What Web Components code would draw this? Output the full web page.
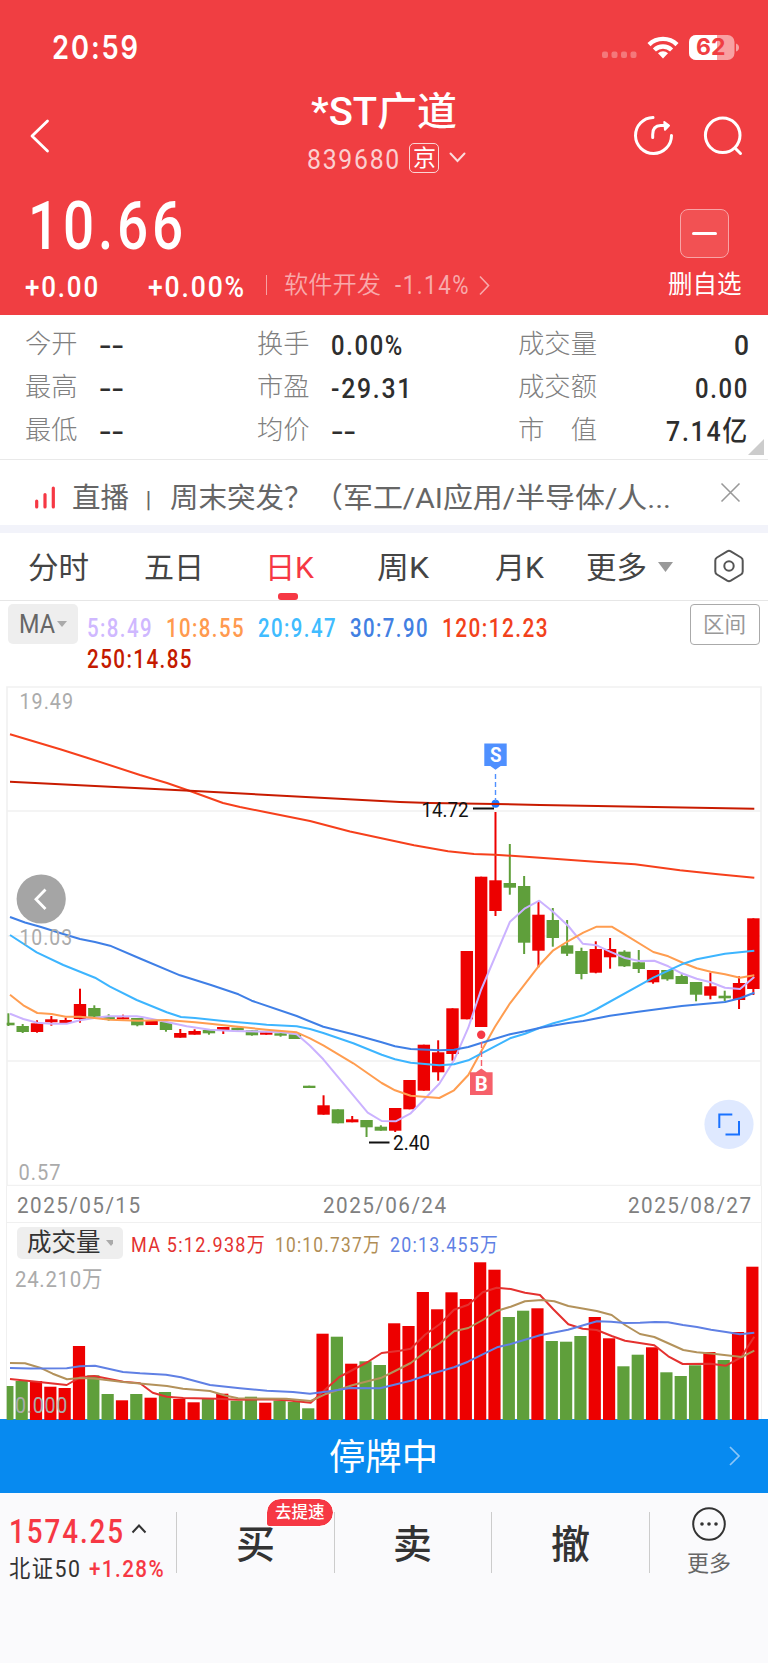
<!DOCTYPE html>
<html lang="zh-CN">
<head>
<meta charset="utf-8">
<title>*ST广道</title>
<style>
    body {
        margin: 0;
        width: 768px;
        background: #fff;
        color: #333;
        font-family: Roboto, 'Noto Sans CJK SC', sans-serif;
    }
</style>
</head>
<body>
<stock-app></stock-app>

<script>
const RED = '#ed0000';
const GREEN = '#5f9f3b';

const define = (name, html) => {
    customElements.define(name, class extends HTMLElement {
        constructor() {
            super();
            this.attachShadow({ mode: 'open' }).innerHTML = html;
        }
    });
};

// One line of text squeezed into a given width. The box is as tall as the
// capitals, so its bottom edge is the baseline. Figures are tracked out a bit,
// which leaves them narrower.
class FitText extends HTMLElement {
    constructor() {
        super();
        this.attachShadow({ mode: 'open' });
    }

    connectedCallback() {
        const w = this.getAttribute('w');
        const size = this.getAttribute('size');
        const h = (size * 0.711).toFixed(2);
        const tracking = /\d\d|\d\.\d/.test(this.textContent) ? 0.07 : 0;
        this.shadowRoot.innerHTML = `
            <style>
                :host { display: block; flex: none; }
                svg { display: block; overflow: visible; }
                text { font-size: ${size}px; font-weight: ${this.getAttribute('weight') || 400}; letter-spacing: ${tracking}em; fill: currentColor; white-space: pre; }
            </style>
            <svg width="${w}" height="${h}"><text y="${h}" textLength="${w}" lengthAdjust="spacingAndGlyphs"></text></svg>
        `;
        this.shadowRoot.querySelector('text').textContent = this.textContent;
    }
}
customElements.define('fit-text', FitText);

define('status-bar', `
    <style>
        :host { display: flex; height: 62px; align-items: flex-end; justify-content: space-between; padding: 0 28px 0 52px; }
        fit-text { margin-bottom: 3px; font-family: Inter, sans-serif; }
        svg { font-family: Inter, sans-serif; }
    </style>
    <fit-text w="88" size="32" weight="600">20:59</fit-text>
    <svg width="140" height="29" viewBox="600 33 140 29">
        <g fill="#fff" opacity=".3">
            <rect x="602" y="51.5" width="6" height="6.5" rx="2"/><rect x="611.5" y="51.5" width="6" height="6.5" rx="2"/>
            <rect x="621" y="51.5" width="6" height="6.5" rx="2"/><rect x="630.5" y="51.5" width="6" height="6.5" rx="2"/>
        </g>
        <g fill="none" stroke="#fff" stroke-width="4.4">
            <path d="M649 44.6a20 20 0 0 1 28 0"/>
            <path d="M654.4 50a12.2 12.2 0 0 1 17.2 0"/>
        </g>
        <path d="M663 58.5l-5-5.2a7.4 7.4 0 0 1 10 0z" fill="#fff"/>
        <clipPath id="b"><rect x="689" y="35" width="45.5" height="25" rx="7"/></clipPath>
        <g clip-path="url(#b)">
            <rect x="689" y="35" width="46" height="25" fill="#f8a1a2"/>
            <rect x="689" y="35" width="28" height="25" fill="#fff"/>
        </g>
        <path d="M736 43.5q3 1 3 4t-3 4z" fill="#f8a1a2"/>
        <text x="696" y="55.3" font-size="22.5" font-weight="700" fill="#f03e42" textLength="29.5" lengthAdjust="spacingAndGlyphs">62</text>
    </svg>
`);

define('nav-bar', `
    <style>
        :host { display: grid; grid-template-columns: 1fr auto 1fr; height: 114px; }
        .icons { margin-top: 50px; display: flex; gap: 26px; justify-self: end; padding-right: 23px; }
        .back { margin: 56px 0 0 28px; }
        .title { padding-top: 35px; display: flex; flex-direction: column; align-items: center; }
        .sub { margin: 18px 0 0 5px; display: flex; align-items: center; height: 30px; }
        .code { color: #fbcfd0; margin-right: 8px; padding-top: 2px; }
        .tag { box-sizing: border-box; width: 30px; height: 30px; border: 1.5px solid #fbd5d5; border-radius: 5px; margin-right: 10px; padding: 6px 0 0 2.5px; }
    </style>
    <svg class="back" width="24" height="36" fill="none" stroke="#fff" stroke-width="2.8" stroke-linecap="round" stroke-linejoin="round"><path d="M19.5 3L4 18l15.500 15"/></svg>
    <div class="title">
        <fit-text w="146" size="39" weight="500">*ST广道</fit-text>
        <div class="sub">
            <fit-text class="code" w="94" size="28">839680</fit-text>
            <div class="tag"><fit-text w="23" size="22.500">京</fit-text></div>
            <svg width="17" height="11" fill="none" stroke="#fbdcdc" stroke-width="2" stroke-linecap="round"><path d="M1.500 1.500l7 7.500 7-7.500"/></svg>
        </div>
    </div>
    <div class="icons">
        <svg width="44" height="46" viewBox="631 112 44 46" fill="none" stroke="#fff" stroke-width="3" stroke-linecap="round" stroke-linejoin="round">
            <path d="M653 117.500a18 18 0 1 0 18.500 18"/>
            <path d="M652.700 137.500v-3q0-9 8-9h7"/><path d="M664.300 122l4.700 3.600-4 4.200z" fill="#fff" stroke-width="2"/>
        </svg>
        <svg width="44" height="46" viewBox="701 112 44 46" fill="none" stroke="#fff" stroke-width="3" stroke-linecap="round">
            <circle cx="722.700" cy="135.300" r="17.300"/><path d="M735.500 148.500l5 5"/>
        </svg>
    </div>
`);

define('quote-head', `
    <style>
        :host { display: flex; justify-content: space-between; height: 139px; }
        .left { padding: 25px 0 0 25px; }
        .price { margin-left: 3px; }
        .row { display: flex; align-items: flex-end; margin-top: 26px; height: 22px; }
        .pct { margin-left: 48px; }
        i { width: 1px; height: 20px; background: #f7a1a3; margin: 0 17px 2px 20px; }
        .sector { color: #f8a9ab; }
        .sector.cn { margin-bottom: 3px; }
        .sector.num { margin: 0 9px 3px 14px; }
        .right { width: 76px; padding: 33px 25px 0 0; display: flex; flex-direction: column; align-items: center; }
        .del { box-sizing: border-box; width: 49px; height: 49px; border: 1px solid #f8a4a6; border-radius: 8px; background: #f25153; display: flex; align-items: center; justify-content: center; margin: 0 2px 17.500px 0; }
        .del::before { content: ''; width: 25px; height: 3px; border-radius: 2px; background: #fff; }
    </style>
    <div class="left">
        <fit-text class="price" w="159" size="67" weight="500">10.66</fit-text>
        <div class="row">
            <fit-text w="75" size="29" weight="500">+0.00</fit-text>
            <fit-text class="pct" w="98" size="29" weight="500">+0.00%</fit-text>
            <i></i>
            <fit-text class="sector cn" w="97" size="24.300" weight="350">软件开发</fit-text>
            <fit-text class="sector num" w="75" size="25">-1.14%</fit-text>
            <svg width="11" height="22" fill="none" stroke="#f8a9ab" stroke-width="1.600"><path d="M1 1.500l8.500 9L1 19.500"/></svg>
        </div>
    </div>
    <div class="right">
        <div class="del"></div>
        <fit-text w="73.500" size="24.500">删自选</fit-text>
    </div>
`);

define('stat-grid', `
    <style>
        :host { display: grid; grid-template-columns: 232px 261px 1fr; grid-auto-rows: 40px; row-gap: 3px; box-sizing: border-box; height: 145px; padding: 0 19px 0 25px; border-bottom: 1.500px solid #e9e9e9; position: relative; }
        div { display: flex; align-items: flex-end; }
        .k { color: #808080; margin: 0 21px 2.500px 0; }
        .v { color: #2e2e2e; }
        .end { margin-left: auto; }
        svg { position: absolute; right: 4px; bottom: 4px; }
    </style>
    <div><fit-text class="k" w="52.500" size="26.200" weight="300">今开</fit-text><fit-text class="v" w="25" size="28" weight="500">--</fit-text></div>
    <div><fit-text class="k" w="52.500" size="26.200" weight="300">换手</fit-text><fit-text class="v" w="73" size="28" weight="500">0.00%</fit-text></div>
    <div><fit-text class="k" w="79" size="26.200" weight="300">成交量</fit-text><fit-text class="v end" w="15" size="28" weight="500">0</fit-text></div>
    <div><fit-text class="k" w="52.500" size="26.200" weight="300">最高</fit-text><fit-text class="v" w="25" size="28" weight="500">--</fit-text></div>
    <div><fit-text class="k" w="52.500" size="26.200" weight="300">市盈</fit-text><fit-text class="v" w="82" size="28" weight="500">-29.31</fit-text></div>
    <div><fit-text class="k" w="79" size="26.200" weight="300">成交额</fit-text><fit-text class="v end" w="54" size="28" weight="500">0.00</fit-text></div>
    <div><fit-text class="k" w="52.500" size="26.200" weight="300">最低</fit-text><fit-text class="v" w="25" size="28" weight="500">--</fit-text></div>
    <div><fit-text class="k" w="52.500" size="26.200" weight="300">均价</fit-text><fit-text class="v" w="25" size="28" weight="500">--</fit-text></div>
    <div><fit-text class="k" w="79" size="26.200" weight="300">市　值</fit-text><fit-text class="v end" w="83" size="28" weight="500">7.14亿</fit-text></div>
    <svg width="16" height="16"><path d="M16 0v16H0z" fill="#ccc"/></svg>
`);

define('live-ticker', `
    <style>
        :host { display: flex; align-items: flex-end; box-sizing: border-box; height: 72.500px; padding: 0 27px 16px 34px; border-bottom: 8.500px solid #f2f3fa; color: #666; }
        .bars { margin: 0 16px -6px 0; }
        .close { margin: 0 0 0 auto; padding-bottom: 6px; }
        .name { margin-right: 9px; }
        .sep { margin: 0 11px 1px 0; }
    </style>
    <svg class="bars" width="22" height="30" stroke="#f63844" stroke-width="3.200" stroke-linecap="round"><path d="M2.700 16v6M11 9.500V22M19.300 3v19"/></svg>
    <fit-text class="name" w="57" size="28.500">直播</fit-text>
    <fit-text class="sep" w="21" size="21">丨</fit-text>
    <fit-text w="142.500" size="28.500">周末突发？</fit-text>
    <fit-text w="358" size="28.500">（军工/AI应用/半导体/人...</fit-text>
    <svg class="close" width="21" height="21" stroke="#999" stroke-width="1.600"><path d="M1.500 1.500l18 18M19.500 1.500l-18 18"/></svg>
`);

define('period-tabs', `
    <style>
        :host { display: grid; grid-template-columns: 116px 121px 112px 118px 91px 127px auto; align-items: start; box-sizing: border-box; height: 68.500px; padding: 24px 0 0 28px; border-bottom: 1.500px solid #e6e6e6; color: #444; }
        .on { color: #f63844; }
        .on::after { content: ''; display: block; width: 20px; height: 6.500px; border-radius: 3px; background: #f63844; margin: 15.500px 0 0 13px; }
        .more { display: flex; gap: 11px; align-items: center; }
        .set { margin-top: -8px; }
    </style>
    <fit-text w="61" size="30">分时</fit-text>
    <fit-text w="60" size="30">五日</fit-text>
    <div class="on"><fit-text w="49" size="30">日K</fit-text></div>
    <fit-text w="52" size="30">周K</fit-text>
    <fit-text w="49" size="30">月K</fit-text>
    <div class="more"><fit-text w="61" size="30">更多</fit-text><svg width="15" height="10"><path d="M0 0h15L7.500 10z" fill="#999"/></svg></div>
    <svg class="set" width="32" height="34" fill="none" stroke="#555" stroke-width="2"><path d="M14.200 2.300Q16 1.300 17.800 2.300L28 8.500q1.700 1 1.700 3V22.500q0 2-1.700 3L17.800 31.700q-1.800 1-3.600 0L4 25.500q-1.700-1-1.700-3V11.500q0-2 1.700-3z"/><circle cx="16" cy="17" r="4.700"/></svg>
`);

define('ma-legend', `
    <style>
        :host { display: flex; height: 85px; box-sizing: border-box; padding: 2.500px 8px 0; }
        .pick { display: flex; box-sizing: border-box; width: 70px; height: 40px; border-radius: 5px; background: #eee; color: #666; padding: 11.500px 0 0 11px; gap: 2px; }
        .pick svg { margin-top: 6px; }
        .list { display: flex; flex-wrap: wrap; align-content: flex-start; gap: 13.500px 13px; width: 480px; padding: 15.500px 0 0 9px; }
        .range { margin-left: auto; box-sizing: border-box; width: 70px; height: 41px; border: 1.500px solid #aaa; border-radius: 4px; color: #999; padding: 12px 0 0 12px; }
    </style>
    <div class="pick"><fit-text w="36" size="25">MA</fit-text><svg width="10" height="6"><path d="M0 0h10L5 6z" fill="#aaa"/></svg></div>
    <div class="list">
        <fit-text w="66" size="25" weight="500" style="color:#cfb8ff">5:8.49</fit-text>
        <fit-text w="79" size="25" weight="500" style="color:#ff9a4f">10:8.55</fit-text>
        <fit-text w="79" size="25" weight="500" style="color:#40bcff">20:9.47</fit-text>
        <fit-text w="79" size="25" weight="500" style="color:#4280e2">30:7.90</fit-text>
        <fit-text w="107" size="25" weight="500" style="color:#f2421b">120:12.23</fit-text>
        <fit-text w="106" size="25" weight="500" style="color:#c41a00">250:14.85</fit-text>
    </div>
    <div class="range"><fit-text w="43" size="21.500">区间</fit-text></div>
`);

// [direction, high, body top, body bottom, low, volume top]
const candles = [
    ['g', 1013.3, 1022.7, 1025.3, 1026, 1386], ['g', 1024, 1026, 1032, 1033, 1381], ['r', 1020.3, 1023.3, 1032, 1032.7, 1381],
    ['r', 1016, 1019.3, 1022.3, 1025.7, 1386.7], ['r', 1017.7, 1020, 1023, 1023, 1388], ['r', 988.7, 1004, 1019, 1022.7, 1346],
    ['g', 1005.3, 1008, 1016.7, 1018, 1375.3], ['g', 1014.3, 1017, 1019.7, 1020.7, 1394], ['r', 1014.7, 1017.3, 1019.3, 1019.3, 1400.3],
    ['g', 1018, 1018, 1025.3, 1026.3, 1394], ['r', 1021, 1021, 1025, 1025, 1397.7], ['g', 1022, 1022, 1030, 1031.7, 1392],
    ['r', 1029, 1033, 1037.7, 1037.7, 1399], ['r', 1029.3, 1031, 1034.7, 1034.7, 1402.3], ['g', 1030, 1030, 1033.3, 1034.7, 1399],
    ['r', 1027, 1027, 1030.7, 1034, 1393.7], ['g', 1027.7, 1027.7, 1030.3, 1030.3, 1400.7], ['g', 1030.3, 1030.3, 1035.3, 1035.7, 1396.7],
    ['r', 1032.3, 1032.3, 1034.7, 1034.7, 1402.7], ['g', 1033.3, 1033.3, 1035.7, 1036.7, 1400.7], ['g', 1034.3, 1034.3, 1039, 1039, 1402],
    ['g', 1085.7, 1085.7, 1088, 1088, 1408.3], ['r', 1095.3, 1105.3, 1114.7, 1114.7, 1333.7], ['g', 1109.3, 1109.3, 1123.3, 1123.3, 1336.7],
    ['r', 1116, 1119.3, 1122.3, 1122.3, 1363.7], ['g', 1120, 1120, 1127.3, 1137, 1361.3], ['g', 1125.3, 1126.7, 1130.7, 1130.7, 1365],
    ['r', 1108, 1108, 1130.7, 1132, 1323.3], ['r', 1080, 1080, 1109.3, 1109.3, 1326], ['r', 1044.7, 1044.7, 1090.7, 1090.7, 1292],
    ['r', 1040.3, 1052.3, 1072.3, 1080.7, 1309.3], ['r', 1008.3, 1008.3, 1054, 1060.7, 1292.3], ['r', 951, 951, 1019.3, 1019.3, 1299],
    ['r', 876.7, 876.7, 1027, 1027, 1262.3], ['r', 812, 880.3, 911, 916, 1269.7], ['g', 844, 883, 887.7, 894.7, 1317],
    ['g', 876, 886, 942.7, 954, 1310.7], ['r', 901.7, 914.7, 950.7, 967.3, 1308.3], ['g', 908, 920, 938, 946.7, 1341],
    ['g', 920, 945.3, 953.7, 956, 1341.7], ['g', 947.7, 951, 974, 979.3, 1336], ['r', 941.3, 949, 972.7, 973.3, 1317],
    ['r', 938, 949, 957.3, 968.7, 1338.3], ['g', 950.3, 951.7, 966.3, 967, 1366.3], ['g', 950, 962.3, 969, 973, 1354.7],
    ['r', 970, 970, 982.3, 983.7, 1347.3], ['g', 970, 970, 979.3, 980.7, 1372.3], ['g', 974.3, 976, 984, 984, 1376],
    ['g', 982, 982, 994.7, 1001.3, 1365.3], ['r', 972.7, 986.3, 995.7, 999.3, 1352], ['g', 990.7, 995.7, 998.3, 1001, 1360],
    ['r', 976.3, 983, 1000, 1009, 1332], ['r', 918.3, 918.3, 989, 995, 1266.7]
];
const STEP = 14.327;

const priceLines = [
    ['#cbb2ff', '10,1013.7 23.3,1019 37.3,1022.7 51.7,1023.7 66.7,1023.7 80,1020.3 94.3,1018 108.3,1016.3 136.7,1016.3 143.3,1017.3 166.7,1022 186.7,1026.3 210,1029.7 233.3,1031 281.7,1032 296.7,1034.3 310,1045.7 323.3,1059.3 367.7,1112.7 381.7,1121 395.7,1121.3 410.7,1113.3 439.3,1083.7 454,1060.3 468.3,1027.7 481,990 510,921.7 525,908.3 539.3,900.7 553.3,912 568.3,926 582.7,943.7 596.7,945.3 610,951.7 625,958 639.3,961 654.3,960.7 668.3,966.3 681.7,973.3 696.7,978.7 710.7,982.3 725,987.7 740,989 754.3,977'],
    ['#ff9d50', '10,994.7 23.3,1005.3 37.3,1013 51.7,1014 65.7,1016.7 80,1016.7 94.3,1018 110,1019.7 138.3,1020.7 166.7,1020 195,1022.3 210,1023.7 233.3,1026.3 266.7,1029.7 296.7,1032.3 310,1038.3 323.3,1045.3 353.3,1063.3 381.7,1083 395,1090.3 410.7,1095.7 439.3,1098 454,1090.3 468.3,1075 481,1051.7 495,1026.7 510,1003.3 539.3,965.3 553.3,950.3 568.3,941 583.3,932.7 596.7,926.7 611.7,926.7 625,934.7 653.3,952 668.3,956.3 683.3,963 696.7,968.3 710.7,971.7 725,974.3 740,977.7 754.3,975.3'],
    ['#3db5ff', '10,935 36.7,952.3 63.3,965 95,977.7 110,986.7 136.7,1000 166.7,1012.3 181,1017 195,1018 223.3,1021 266.7,1024.7 296.7,1026.3 310,1029 323.3,1033 353.3,1043.3 381.7,1054.7 395,1059.3 410.7,1062.7 439.3,1065.3 454,1064.3 468.3,1060.3 510,1038.3 525,1033.7 539.3,1028 553.3,1023.3 583.3,1015.3 596.7,1009 653.3,977.7 681.7,964.3 696.7,959.3 725,953.7 754.3,950.7'],
    ['#3f7fe6', '10,917 25,922.5 41,927 60,933 80,939 95,942 110,945.7 140,958.5 180,975.3 211,985 238.5,994.3 251.7,1000.7 296.7,1016 323.3,1026.7 353,1034.3 381.7,1042.3 395,1046.3 410.7,1049 439.3,1050.3 454,1049.7 468.3,1047 481,1043 510,1034.3 525,1031.3 539.3,1028 568.3,1023 583.3,1021 610,1015.7 638.3,1011.7 681.7,1006 725,1002 740,998.3 754.3,992.7'],
    ['#f6401c', '10,734.3 61,749.5 87,757.7 140,775 167,783 190,791 223,803 240,807 265,812 310,821 350,831.5 400,842.3 414,845.3 448,851.3 474,854 495,854.7 540,857.7 595,861.7 635,864.3 680,870.3 718,874.3 754.3,877.7'],
    ['#c81b00', '10,781.7 190,790.7 400,802 430,803 495,804 540,805 754.3,808.7']
];
const volumeLines = [
    ['#e4312f', '10,1379 36.7,1381.7 66.7,1385 80,1377.3 94.3,1376 123.3,1381.7 140,1383.3 152.7,1392.7 166.7,1396.7 183.3,1398 216.7,1398.7 238.3,1399.7 266.7,1399.3 286.7,1400.3 310.7,1402.7 325,1389.7 339.3,1377 367.7,1362 381.7,1353 400,1350.7 410.7,1348.7 425,1334.7 440,1324 454,1309.7 468.3,1304.7 482.7,1292.3 496.7,1287.7 510.7,1289 525,1292.7 540,1295 553.3,1309.3 568.3,1324.3 582.7,1328.7 596.7,1330 611.7,1336 625,1340.7 654.3,1345.3 668.3,1356.3 682.7,1364 710.7,1363.7 726,1365.7 741,1357.3 754.3,1336.7'],
    ['#b3925b', '10,1363 25,1363.3 40,1367.7 52.7,1373.7 67,1379.3 80,1378 94,1378.5 123,1382 167,1386 183,1388.7 210,1391 225,1395.5 238,1398.3 286,1398.7 310.7,1401 325,1394.3 353,1385 367.7,1381.3 381.7,1377.7 395,1371 410.7,1363 425,1352.3 440,1343 454,1331.3 468.3,1328 482.7,1320 496.7,1311 510.7,1306.7 525,1301.3 541.7,1300 554.3,1301.3 568.3,1306 596.7,1311 611.7,1315 625,1325 640,1334 654.3,1337 683.3,1350 696.7,1352.3 713.3,1353.7 741.7,1357 754.3,1350.7'],
    ['#6080e4', '10,1368 30,1368.5 66.7,1368.3 80,1366.3 95,1365.7 123,1372 140,1373.3 166,1374.7 181,1377.3 210,1385 240,1388.3 267,1390.7 293,1392 310,1393.7 333,1390.7 350,1388 380,1388.3 410.7,1380.7 425,1375.7 454,1367.3 468,1361.7 482.7,1354.3 497,1347.3 510,1344.3 540,1335.3 568,1329.7 597,1321.3 611,1321.7 625,1323 640,1322.7 655,1322 668,1322.3 683,1325 697,1327 711,1329.7 726,1332 740,1334.3 754.3,1332.7']
];
const polylines = (lines) => lines.map(([color, points]) =>
    `<polyline points="${points}" fill="none" stroke="${color}" stroke-width="2" stroke-linejoin="round"/>`).join('');
const label = (x, y, w, size, text, attrs = '') =>
    `<text x="${x}" y="${y}" font-size="${size}" textLength="${w}" lengthAdjust="spacingAndGlyphs" ${attrs}>${text}</text>`;

class KlineChart extends HTMLElement {
    constructor() {
        super();
        this.attachShadow({ mode: 'open' });
    }

    connectedCallback() {
        const bodies = candles.map(([dir, high, top, bottom, low], i) => {
            const cx = 80 + STEP * (i - 5);
            const left = Math.max(cx - 6.2, 6.7);
            return `<g fill="${dir === 'r' ? RED : GREEN}">
                <rect x="${cx - 1}" y="${high}" width="2" height="${low - high}"/>
                <rect x="${left}" y="${top}" width="${cx + 6.2 - left}" height="${bottom - top}"/></g>`;
        }).join('');
        this.shadowRoot.innerHTML = `
            <style>
                :host { display: block; height: 500px; }
                svg { display: block; }
                .axis { letter-spacing: .07em; }
            </style>
            <svg width="768" height="500" viewBox="0 686 768 500">
                <path d="M7 1186V687H761V1186M7 811H761M7 936H761M7 1061H761M7 1185.5H761" fill="none" stroke="#f1f1f1" stroke-width="1.700"/>
                ${bodies}
                <circle cx="495.500" cy="803.700" r="4" fill="#1f78ff"/>
                ${polylines(priceLines)}
                <g class="axis" fill="#ababab">
                    ${label(19.5, 709.3, 54.5, 22.8, '19.49')}
                    ${label(19.5, 945, 53.5, 22.8, '10.03')}
                    ${label(18.5, 1180, 43, 22.8, '0.57')}
                </g>
                <path d="M484.300 743.500h22.400v22.500h-6l-5.200 3.700-5.200-3.700h-6z" fill="#4f90ff"/>
                ${label(490, 761.5, 11.5, 19.5, 'S', 'font-weight="700" fill="#fff"')}
                <path d="M495.500 774v27" stroke="#4f90ff" stroke-width="1.400" stroke-dasharray="5 3"/>
                <path d="M473 808.500h21M369 1142.500h20.500" stroke="#111" stroke-width="2"/>
                ${label(421.5, 817, 47, 20.4, '14.72', 'fill="#111"')}
                ${label(393, 1150.2, 37, 20.4, '2.40', 'fill="#111"')}
                <circle cx="481.200" cy="1034.700" r="4.200" fill="#f63844"/>
                <path d="M481.500 1042v27" stroke="#f6606a" stroke-width="1.400" stroke-dasharray="6 3"/>
                <path d="M470 1072.300h6l5.300-3.800 5.300 3.800h6v22.700H470z" fill="#f6606a"/>
                ${label(474.7, 1091, 13, 19.5, 'B', 'font-weight="700" fill="#fff"')}
                <circle cx="41.200" cy="899" r="24.600" fill="#a5a5a5"/>
                <path d="M45.500 889.500l-9.500 9.700 9.500 9.700" fill="none" stroke="#fff" stroke-width="2.800"/>
                <circle cx="729" cy="1124.300" r="24.600" fill="#dfe9ff"/>
                <path d="M719.300 1128v-13.500h13M739 1121v13.500h-13.500" fill="none" stroke="#1a72ff" stroke-width="2"/>
            </svg>
        `;
    }
}
customElements.define('kline-chart', KlineChart);

define('date-axis', `
    <style>
        :host { display: flex; justify-content: space-between; box-sizing: border-box; height: 37px; margin: 0 6px; padding: 10.700px 8.500px 0 10px; border: solid #f0f0f0; border-width: 0 1.500px 1.500px; color: #808080; }
    </style>
    <fit-text w="124.500" size="22.800">2025/05/15</fit-text>
    <fit-text w="124.500" size="22.800">2025/06/24</fit-text>
    <fit-text w="124.500" size="22.800">2025/08/27</fit-text>
`);

class VolumeChart extends HTMLElement {
    constructor() {
        super();
        this.attachShadow({ mode: 'open' });
    }

    connectedCallback() {
        const bars = candles.map(([dir, , , , , top], i) => {
            const cx = 79 + STEP * (i - 5);
            const left = Math.max(cx - 6.1, 6.7);
            return `<rect x="${left}" y="${top}" width="${cx + 6.1 - left}" height="${1420 - top}" fill="${dir === 'r' ? RED : GREEN}"/>`;
        }).join('');
        this.shadowRoot.innerHTML = `
            <style>
                :host { display: block; height: 196px; box-sizing: border-box; margin: 0 6px; border: solid #f0f0f0; border-width: 0 1.500px; }
                .legend { display: flex; align-items: flex-end; height: 36px; padding-left: 9.500px; }
                .pick { display: flex; align-items: center; box-sizing: border-box; width: 106px; height: 32px; border-radius: 5px; background: #eee; color: #333; padding: 0 10px; gap: 5.500px; margin-right: 8px; }
                .ma { margin: 0 9px 7.500px 0; }
                .axis { letter-spacing: .05em; }
                svg.plot { display: block; margin-left: -7px; overflow: visible; }
            </style>
            <div class="legend">
                <div class="pick"><fit-text w="73.500" size="24.500">成交量</fit-text><svg width="10" height="6"><path d="M0 0h10L5 6z" fill="#aaa"/></svg></div>
                <fit-text class="ma" w="135" size="20.500" style="color:#e4312f">MA 5:12.938万</fit-text>
                <fit-text class="ma" w="106.500" size="20.500" style="color:#b08d55">10:10.737万</fit-text>
                <fit-text class="ma" w="109" size="20.500" style="color:#6080e4">20:13.455万</fit-text>
            </div>
            <svg class="plot" width="768" height="160" viewBox="0 1259 768 160">
                ${bars}
                ${polylines(volumeLines)}
                <g class="axis" fill="#ababab">
                    ${label(15, 1287, 88, 22.8, '24.210万')}
                    ${label(15, 1413, 53, 22.8, '0.000')}
                </g>
            </svg>
        `;
    }
}
customElements.define('volume-chart', VolumeChart);

define('halt-banner', `
    <style>
        :host { display: grid; grid-template-columns: 1fr auto 1fr; box-sizing: border-box; height: 74px; padding: 25px 1px 0 0; background: #078af0; color: #fff; }
        fit-text { grid-column: 2; }
        svg { justify-self: end; margin: 2px 26px 0 0; }
    </style>
    <fit-text w="109" size="36.300">停牌中</fit-text>
    <svg width="12" height="20" fill="none" stroke="#8cc6f7" stroke-width="1.700"><path d="M1 1l9 9-9 9"/></svg>
`);

define('trade-button', `
    <style>
        :host { display: flex; justify-content: center; align-items: flex-start; box-sizing: border-box; border-left: 1.500px solid #ccc; height: 61px; padding-top: 17.500px; position: relative; color: #333; }
        slot[name=badge]::slotted(*) { position: absolute; right: 1px; top: -13px; box-sizing: border-box; width: 66px; height: 27px; border-radius: 14px 14px 14px 2px; background: #f63844; color: #fff; padding: 6.500px 0 0 8.500px; outline: 1.500px solid #fff; }
    </style>
    <slot></slot><slot name="badge"></slot>
`);

define('trade-bar', `
    <style>
        :host { display: grid; grid-template-columns: 175.500px 158px 157.500px 158px 1fr; box-sizing: border-box; height: 170px; padding-top: 19px; background: #fafafc; align-items: start; }
        .index { padding: 8px 0 0 9px; }
        .row { display: flex; align-items: flex-end; }
        .up { color: #f63844; }
        .row svg { margin: 0 0 9px 6px; }
        .name { margin-top: 17px; gap: 7px; }
        .more { display: flex; flex-direction: column; align-items: center; border-left: 1.500px solid #ccc; height: 61px; color: #666; }
        .more svg { margin-top: -6px; flex: none; }
        .more fit-text { margin-top: 13px; }
    </style>
    <div class="index">
        <div class="row up"><fit-text w="116" size="33" weight="500">1574.25</fit-text>
            <svg width="16" height="10" fill="none" stroke="#333" stroke-width="2"><path d="M1.500 8.500L8 1.500l6.500 7"/></svg></div>
        <div class="row name"><fit-text w="72.500" size="23.500">北证50</fit-text><fit-text class="up" w="76" size="23" weight="500">+1.28%</fit-text></div>
    </div>
    <trade-button><fit-text w="39" size="39" weight="500">买</fit-text><div slot="badge"><fit-text w="49.500" size="16.500" weight="500">去提速</fit-text></div></trade-button>
    <trade-button><fit-text w="39" size="39" weight="500">卖</fit-text></trade-button>
    <trade-button><fit-text w="39" size="39" weight="500">撤</fit-text></trade-button>
    <div class="more">
        <svg width="36" height="36"><circle cx="18" cy="18" r="15.800" fill="none" stroke="#333" stroke-width="2"/><g fill="#333"><circle cx="11" cy="18" r="1.800"/><circle cx="18" cy="18" r="1.800"/><circle cx="25" cy="18" r="1.800"/></g></svg>
        <fit-text w="44" size="22">更多</fit-text>
    </div>
`);

define('stock-app', `
    <style>
        :host { display: block; width: 768px; height: 1663px; overflow: hidden; }
        header { background: #f03e42; color: #fff; height: 315px; }
    </style>
    <header>
        <status-bar></status-bar>
        <nav-bar></nav-bar>
        <quote-head></quote-head>
    </header>
    <stat-grid></stat-grid>
    <live-ticker></live-ticker>
    <period-tabs></period-tabs>
    <ma-legend></ma-legend>
    <kline-chart></kline-chart>
    <date-axis></date-axis>
    <volume-chart></volume-chart>
    <halt-banner></halt-banner>
    <trade-bar></trade-bar>
`);
</script>
</body>
</html>
